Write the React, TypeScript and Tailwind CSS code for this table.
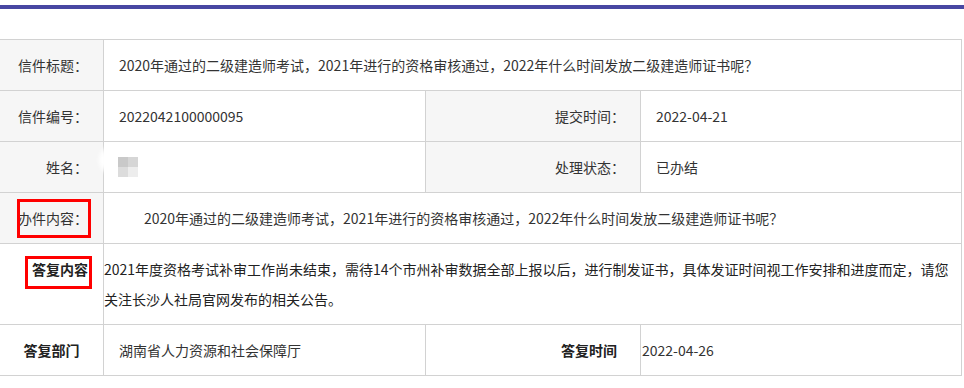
const label = "flex items-center justify-end bg-[#f6f6f6] pr-[15px] border-r border-b border-[#d2d2d2]";
const value = "flex items-center pl-[15px] border-b border-[#d2d2d2]";

function RedBox({ className }: { className: string }) {
  return <div className={`pointer-events-none absolute border-[3px] border-[#ff0000] ${className}`} />;
}

function Mosaic() {
  return (
    <div className="relative flex h-full items-center pl-[14px]">
      <div className="absolute left-[-5px] top-[3px] h-[30px] w-[30px] rounded-full bg-white blur-[2px]" />
      <div className="relative grid h-[20px] w-[20px] grid-cols-2 grid-rows-2">
        <div className="bg-[#c9c9c9]" />
        <div className="bg-[#d6d6d6]" />
        <div className="bg-[#dcdcdc]" />
        <div className="bg-[#ededed]" />
      </div>
    </div>
  );
}

export default function App() {
  return (
    <div className="h-[388px] w-[964px] bg-white pt-[5px] font-['Noto_Sans_CJK_SC',sans-serif] text-[14px] text-[#333]">
      <div className="h-[4px] w-full bg-[#4847a2]" />

      <div className="mt-[30px] grid w-[962px] grid-cols-[104px_322px_215px_321px] border-t border-r border-[#d2d2d2]">
        {/* 信件标题 */}
        <div className={`${label} h-[51px]`}>信件标题：</div>
        <div className={`${value} col-span-3 h-[51px]`}>
          2020年通过的二级建造师考试，2021年进行的资格审核通过，2022年什么时间发放二级建造师证书呢？
        </div>

        {/* 信件编号 / 提交时间 */}
        <div className={`${label} h-[51px]`}>信件编号：</div>
        <div className={`${value} h-[51px] border-r`}>2022042100000095</div>
        <div className={`${label} h-[51px]`}>提交时间：</div>
        <div className={`${value} h-[51px]`}>2022-04-21</div>

        {/* 姓名 / 处理状态 */}
        <div className={`${label} h-[51px]`}>姓名：</div>
        <div className="h-[51px] border-r border-b border-[#d2d2d2]">
          <Mosaic />
        </div>
        <div className={`${label} h-[51px]`}>处理状态：</div>
        <div className={`${value} h-[51px]`}>已办结</div>

        {/* 办件内容 */}
        <div className={`${label} relative h-[51px]`}>
          办件内容：
          <RedBox className="left-[17px] top-[6px] h-[39px] w-[74px]" />
        </div>
        <div className="col-span-3 flex h-[51px] items-center border-b border-[#d2d2d2] pl-[40px]">
          2020年通过的二级建造师考试，2021年进行的资格审核通过，2022年什么时间发放二级建造师证书呢？
        </div>

        {/* 答复内容 */}
        <div className="relative flex h-[81px] justify-end border-r border-b border-[#d2d2d2] pr-[15px] pt-[10px] font-bold leading-[30px] text-[#222]">
          答复内容
          <RedBox className="left-[25px] top-[12px] h-[33px] w-[67px]" />
        </div>
        <div className="col-span-3 h-[81px] border-b border-[#d2d2d2] pr-[4px] pt-[10px] leading-[30px] text-[#222]">
          2021年度资格考试补审工作尚未结束，需待14个市州补审数据全部上报以后，进行制发证书，具体发证时间视工作安排和进度而定，请您关注长沙人社局官网发布的相关公告。
        </div>

        {/* 答复部门 / 答复时间 */}
        <div className="flex h-[51px] items-center justify-center border-r border-b border-[#d2d2d2] font-bold text-[#222]">
          答复部门
        </div>
        <div className={`${value} h-[51px] border-r`}>湖南省人力资源和社会保障厅</div>
        <div className="flex h-[51px] items-center justify-end border-r border-b border-[#d2d2d2] pr-[23px] font-bold text-[#222]">
          答复时间
        </div>
        <div className="flex h-[51px] items-center border-b border-[#d2d2d2] pl-[1px]">2022-04-26</div>
      </div>
    </div>
  );
}
